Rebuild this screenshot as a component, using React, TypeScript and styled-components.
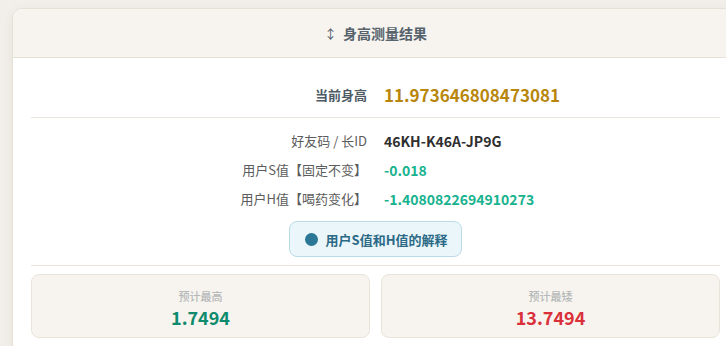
import React from "react";
import styled, { createGlobalStyle } from "styled-components";

const GlobalStyle = createGlobalStyle`
  html, body {
    margin: 0;
    padding: 0;
    background: #f2efea;
    overflow: hidden;
    font-family: "Noto Sans CJK SC", "Noto Sans", sans-serif;
  }
`;

const Page = styled.div`
  padding: 8px 0 0 12px;
  width: 760px;
`;

const Card = styled.section`
  width: 725px;
  background: #fff;
  border: 1px solid #e7e1d8;
  border-radius: 10px;
  box-shadow: 0 2px 10px rgba(90, 70, 40, 0.08);
  overflow: hidden;
`;

const CardHeader = styled.header`
  height: 48px;
  display: flex;
  align-items: center;
  justify-content: center;
  gap: 6px;
  background: #f7f4ef;
  border-bottom: 1px solid #e7e1d8;
  color: #56636d;
  font-size: 14px;
  font-weight: 700;
`;

const Arrow = styled.span`
  font-size: 13px;
  font-weight: 400;
  color: #56636d;
`;

const Body = styled.div`
  padding: 18px 18px 24px;
`;

const MainRow = styled.div`
  display: grid;
  grid-template-columns: 1fr 1fr;
  column-gap: 17px;
  align-items: center;
  height: 36px;
  padding-bottom: 5px;
  border-bottom: 1px solid #ebe5dc;
`;

const Label = styled.div<{ $strong?: boolean }>`
  text-align: right;
  font-size: 13px;
  font-weight: ${(p) => (p.$strong ? 700 : 400)};
  color: ${(p) => (p.$strong ? "#4d5a64" : "#5c5c5c")};
`;

const Value = styled.div<{ $color: string; $size?: number }>`
  font-size: ${(p) => p.$size ?? 14}px;
  font-weight: 700;
  color: ${(p) => p.$color};
`;

const InfoList = styled.div`
  display: grid;
  grid-template-columns: 1fr 1fr;
  grid-auto-rows: 29px;
  column-gap: 17px;
  align-items: center;
  margin-top: 8px;
`;

const ButtonWrap = styled.div`
  display: flex;
  justify-content: center;
  padding: 8px 0 8px;
  border-bottom: 1px solid #ebe5dc;
`;

const ExplainButton = styled.button`
  display: flex;
  align-items: center;
  gap: 8px;
  height: 36px;
  padding: 0 14px 0 15px;
  background: #ebf6fa;
  border: 1px solid #b9dbe6;
  border-radius: 8px;
  color: #2b6a86;
  font-family: inherit;
  font-size: 13px;
  font-weight: 700;
`;

const Dot = styled.span`
  width: 13px;
  height: 13px;
  border-radius: 50%;
  background: #2a7895;
`;

const Stats = styled.div`
  display: grid;
  grid-template-columns: 1fr 1fr;
  gap: 11px;
  margin-top: 8px;
`;

const StatBox = styled.div`
  height: 64px;
  box-sizing: border-box;
  background: #f7f4ef;
  border: 1px solid #e9e3da;
  border-radius: 8px;
  display: flex;
  flex-direction: column;
  align-items: center;
  justify-content: center;
  padding-top: 5px;
`;

const StatLabel = styled.div`
  font-size: 11px;
  font-weight: 500;
  line-height: 16px;
  color: #b6b9b9;
`;

const StatValue = styled.div<{ $color: string }>`
  font-size: 18px;
  font-weight: 700;
  line-height: 26px;
  color: ${(p) => p.$color};
`;

const info = [
  { label: "好友码 / 长ID", value: "46KH-K46A-JP9G", color: "#2f2f2f" },
  { label: "用户S值【固定不变】", value: "-0.018", color: "#17b28e" },
  { label: "用户H值【喝药变化】", value: "-1.4080822694910273", color: "#17b28e" },
];

export default function App() {
  return (
    <Page>
      <GlobalStyle />
      <Card>
        <CardHeader>
          <Arrow>↕</Arrow>身高测量结果
        </CardHeader>
        <Body>
          <MainRow>
            <Label $strong>当前身高</Label>
            <Value $color="#b8860b" $size={17}>
              11.973646808473081
            </Value>
          </MainRow>
          <InfoList>
            {info.map((row) => (
              <React.Fragment key={row.label}>
                <Label>{row.label}</Label>
                <Value $color={row.color}>{row.value}</Value>
              </React.Fragment>
            ))}
          </InfoList>
          <ButtonWrap>
            <ExplainButton>
              <Dot />
              用户S值和H值的解释
            </ExplainButton>
          </ButtonWrap>
          <Stats>
            <StatBox>
              <StatLabel>预计最高</StatLabel>
              <StatValue $color="#0e8a6c">1.7494</StatValue>
            </StatBox>
            <StatBox>
              <StatLabel>预计最矮</StatLabel>
              <StatValue $color="#d9303a">13.7494</StatValue>
            </StatBox>
          </Stats>
        </Body>
      </Card>
    </Page>
  );
}
